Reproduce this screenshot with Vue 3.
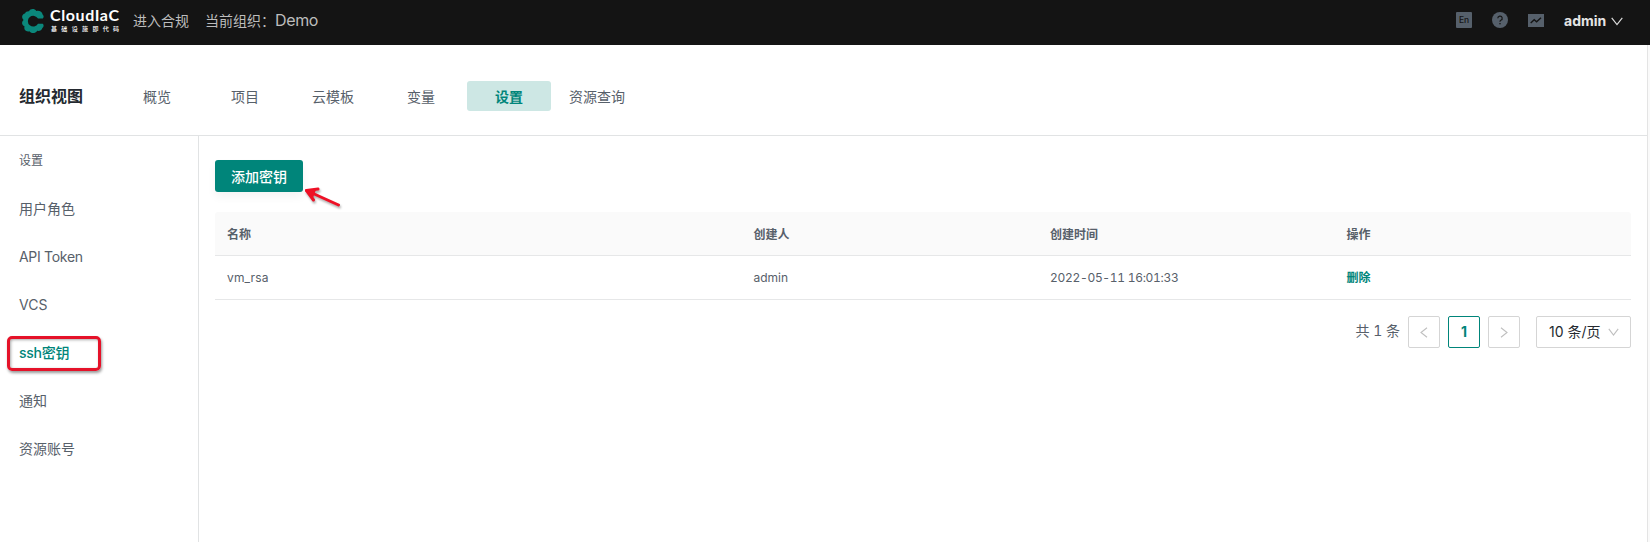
<script setup>
const tabs = ['概览', '项目', '云模板', '变量', '设置', '资源查询']
const menu = ['用户角色', 'API Token', 'VCS', 'ssh密钥', '通知', '资源账号']
const columns = ['名称', '创建人', '创建时间', '操作']
const rows = [{ name: 'vm_rsa', creator: 'admin', created: '2022-05-11 16:01:33' }]
</script>

<template>
  <div class="page">
    <header class="topbar">
      <div class="logo">
        <svg class="mark" width="24" height="26" viewBox="0 0 24 26">
          <path
            d="M8 3.2C9.3.6 13.5.3 15.3 2.9 18.2 2.2 21.3 3.6 21.6 6.6 23 7.6 23 9.5 21.8 10.6H17A5.4 5.4 0 1 0 17 15.8H21.8C23 17 22.9 19 21.4 20 20.8 22.3 18.4 23.2 16.3 22.8 14.4 25.8 10 25.8 8.4 23.3 5 24.2 2.6 21.6 3.5 18.3.6 16.8.4 13.7 2.6 11.9.2 9.7.9 6.2 4 5.6 4.6 3.8 6.3 3 8 3.2Z"
            fill="#0b877b"
          />
        </svg>
        <div class="brand">
          <b>CloudIaC</b>
          <small>基础设施即代码</small>
        </div>
      </div>
      <span class="comply">进入合规</span>
      <span class="org">当前组织：</span><span class="demo">Demo</span>
      <div class="tools">
        <span class="lang">En</span>
        <svg class="help" width="16" height="16" viewBox="0 0 16 16">
          <circle cx="8" cy="8" r="8" fill="#56606b" />
          <path d="M5.8 6.3A2.2 2.2 0 1 1 8.8 8.3Q8 8.7 8 9.7" fill="none" stroke="#141414" stroke-width="1.2" />
          <rect x="7.35" y="11" width="1.3" height="1.3" fill="#141414" />
        </svg>
        <svg class="chart" width="16" height="13" viewBox="0 0 16 13">
          <rect width="16" height="13" fill="#56606b" />
          <path d="M2.7 9 6.2 5.7 8.6 7.8 13 3.7" fill="none" stroke="#141414" stroke-width="1.4" />
        </svg>
        <b class="user">admin</b>
        <svg class="caret" width="12" height="9" viewBox="0 0 12 9">
          <path d="M.7.8 6 7.6 11.3.8" fill="none" stroke="#dcdcdc" stroke-width="1.2" />
        </svg>
      </div>
    </header>

    <div class="content">
      <nav class="views">
        <h1>组织视图</h1>
        <div class="tabs">
          <a v-for="t in tabs" :key="t" :class="{ active: t === '设置' }">{{ t }}</a>
        </div>
      </nav>
      <div class="body">
        <aside>
          <h2>设置</h2>
          <a v-for="m in menu" :key="m" :class="{ active: m === 'ssh密钥', latin: m === 'API Token' }">
            <span>{{ m }}</span>
            <i v-if="m === 'ssh密钥'" class="frame"></i>
          </a>
        </aside>
        <main>
          <div class="actions">
            <button>添加密钥</button>
            <svg class="arrow" width="44" height="28" viewBox="0 0 44 28">
              <g fill="none" stroke="#ee1126" stroke-width="3" stroke-linecap="round" stroke-linejoin="round">
                <path d="M4.5 5.5 36.5 20" />
                <path d="M16 4 4.5 5.5 11.5 15" />
              </g>
              <path d="M4 5.5 14 4.5 11 13Z" fill="#ee1126" />
            </svg>
          </div>
          <div class="table">
            <div class="tr th"><span v-for="c in columns" :key="c">{{ c }}</span></div>
            <div v-for="r in rows" :key="r.name" class="tr">
              <span class="name">{{ r.name }}</span>
              <span>{{ r.creator }}</span>
              <span class="date">{{ r.created }}</span>
              <span class="del">删除</span>
            </div>
          </div>
          <div class="pager">
            <span class="total">共 1 条</span>
            <span class="box"><svg width="8" height="11" viewBox="0 0 8 11"><path d="M7 .8 1 5.5 7 10.2" /></svg></span>
            <span class="box current">1</span>
            <span class="box"><svg width="8" height="11" viewBox="0 0 8 11"><path d="M1 .8 7 5.5 1 10.2" /></svg></span>
            <span class="select">
              10 条/页
              <svg width="11" height="8" viewBox="0 0 11 8"><path d="M.8 .8 5.5 7 10.2 .8" /></svg>
            </span>
          </div>
        </main>
      </div>
    </div>
  </div>
</template>

<style>
body { margin: 0; overflow: hidden; }
</style>

<style scoped>
* { box-sizing: border-box; }
.page {
  height: 542px;
  display: flex;
  flex-direction: column;
  background: #fafafa;
  color: #57606a;
  font: 14px/22px Inter, "Noto Sans CJK SC", sans-serif;
}
.topbar {
  height: 45px;
  flex: none;
  display: flex;
  align-items: center;
  padding: 0 27px 4px 21px;
  background: #141414;
  color: #bdbdbd;
  white-space: nowrap;
}
.logo { display: flex; width: 112px; align-items: center; }
.mark { flex: none; margin-top: 1px; }
.brand { display: flex; flex-direction: column; margin-left: 5px; color: #fff; }
.brand b { font: 700 16px/16px Lato, sans-serif; letter-spacing: .6px; margin-top: -1px; }
.brand small {
  font: 500 6px/8px "Noto Sans CJK SC", sans-serif;
  letter-spacing: 4.35px;
  margin: 2px 0 0 1px;
}
.comply { width: 72px; }
.org { width: 70px; }
.demo { font-size: 16px; letter-spacing: -.35px; line-height: 20px; margin-top: -1px; }
.tools { margin-left: auto; display: flex; align-items: center; }
.lang {
  width: 16px;
  height: 16px;
  margin-top: -1px;
  border-radius: 1px;
  background: #56606b;
  color: #141414;
  font-size: 8.5px;
  font-weight: 500;
  line-height: 16px;
  text-align: center;
}
.help { margin: -1px 0 0 20px; }
.chart { margin: -1px 0 0 20px; }
.user { margin: 1px 5px 0 20px; color: #e4e4e4; width: 42px; font-size: 14px; }
.caret { margin-top: 2px; }
.content {
  flex: 1;
  width: 1648px;
  display: flex;
  flex-direction: column;
  background: #fff;
  border-right: 1px solid #e4e4e4;
}
.views {
  height: 91px;
  flex: none;
  display: flex;
  align-items: center;
  padding: 12px 0 0 19px;
  border-bottom: 1px solid #e1e3e4;
}
h1 { margin: 0; width: 96px; font-size: 16px; line-height: 24px; font-weight: 600; color: #24292f; }
.tabs { display: flex; gap: 4px; }
.tabs a { width: 84px; height: 30px; line-height: 31px; border-radius: 3px; text-align: center; }
.tabs .active { background: #cde7e4; color: #00857a; font-weight: 600; }
.body { flex: 1; display: flex; }
aside { width: 199px; border-right: 1px solid #e1e3e4; padding-top: 12px; }
h2 { margin: 0 0 12px 19px; font-size: 12px; line-height: 25px; font-weight: 400; }
aside a { display: flex; align-items: center; position: relative; height: 48px; padding-left: 19px; }
aside .latin { letter-spacing: -.3px; }
aside .active { color: #00857a; font-weight: 500; letter-spacing: -.25px; }
.frame {
  position: absolute;
  left: 7px;
  top: 7px;
  width: 94px;
  height: 35px;
  border: 3px solid #e51229;
  border-radius: 5px;
  box-shadow: 1px 2px 3px #0006, inset 1px 1px 3px #0005;
}
main { flex: 1; padding: 24px 16px 0; }
.actions { display: flex; position: relative; }
button {
  width: 88px;
  height: 32px;
  padding: 0;
  border: 0;
  border-radius: 3px;
  background: #00857a;
  color: #fff;
  font: 500 14px/33px Inter, "Noto Sans CJK SC", sans-serif;
  box-shadow: 0 5px 10px #0000000c;
}
.arrow { position: absolute; left: 87px; top: 25px; filter: drop-shadow(1px 2px 1px #0005); }
.table { margin-top: 20px; font-size: 12px; }
.tr {
  display: grid;
  grid-template-columns: 526.5px 296.5px 296.5px 1fr;
  height: 44px;
  line-height: 43px;
  padding-left: 12px;
  border-bottom: 1px solid #e6e7e8;
}
.th { background: #fafafa; font-weight: 600; border-radius: 3px 3px 0 0; line-height: 45px; }
.name { letter-spacing: .15px; }
.date { font-variant-numeric: tabular-nums; letter-spacing: -.3px; }
.del { color: #00857a; font-weight: 600; }
.pager { display: flex; justify-content: flex-end; margin-top: 16px; gap: 8px; }
.total { line-height: 30px; font-variant-numeric: tabular-nums; }
.box, .select { height: 32px; border: 1px solid #d5d5d5; border-radius: 2px; display: flex; align-items: center; }
.box { width: 32px; justify-content: center; }
.current { border-color: #00857a; color: #00857a; font-weight: 700; }
.select { width: 95px; margin-left: 8px; padding: 0 11px 0 12px; justify-content: space-between; color: #24292f; white-space: nowrap; }
.pager path { fill: none; stroke: #bfbfbf; stroke-width: 1.1; }
</style>
